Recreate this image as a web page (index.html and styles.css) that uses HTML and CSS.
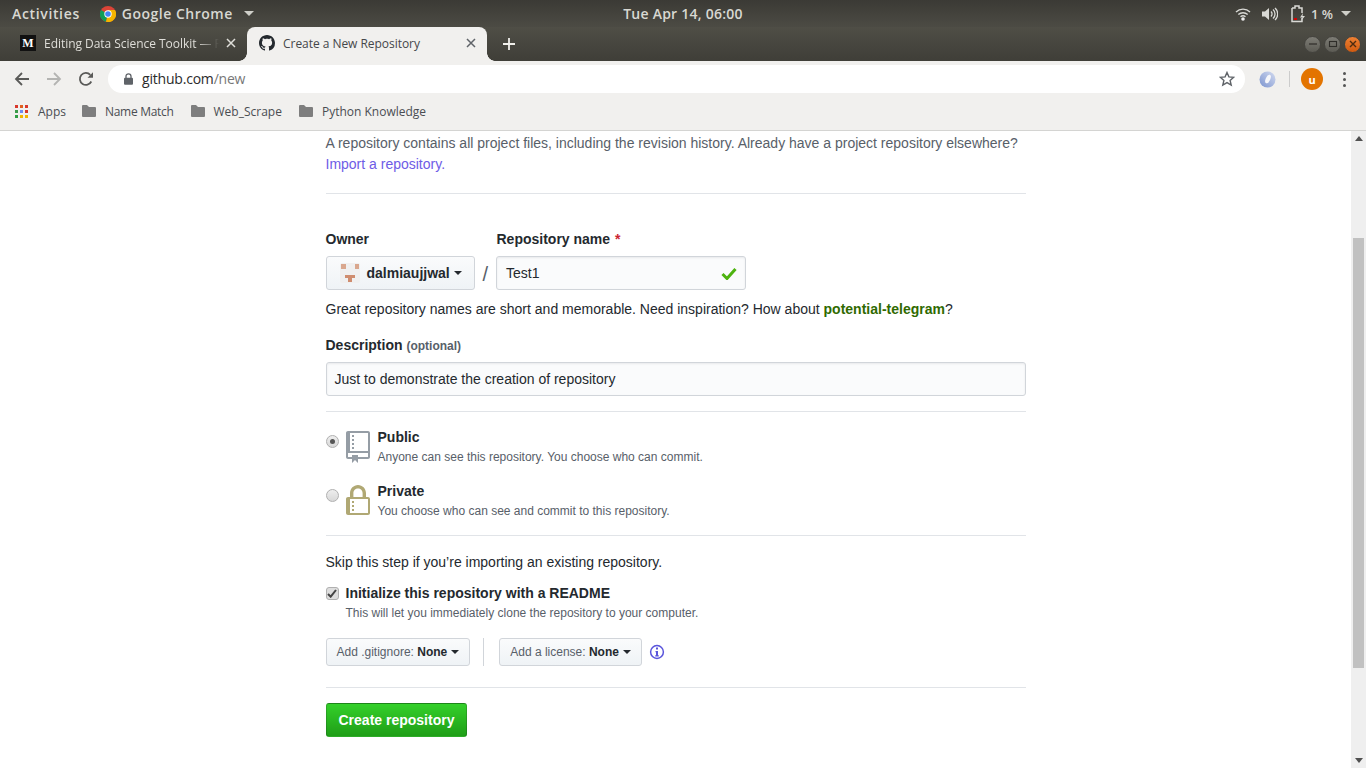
FILE: index.html
```html
<!DOCTYPE html>
<html lang="en">
<head>
<meta charset="utf-8">
<title>Create a New Repository</title>
<link rel="stylesheet" href="styles.css">
</head>
<body>
<div class="topbar">
  <div class="top-left">
    <span class="top-text activities">Activities</span>
    <span class="appmenu">
      <svg class="chrome-logo" width="16" height="16" viewBox="0 0 16 16"><circle cx="8" cy="8" r="8" fill="#db4437"/><path d="M8 8 L1 4 A8 8 0 0 0 6 15.8 Z" fill="#0f9d58"/><path d="M8 8 L6 15.8 A8 8 0 0 0 15 4 L8 4 Z" fill="#f4b400"/><circle cx="8" cy="8" r="3.7" fill="#fff"/><circle cx="8" cy="8" r="2.8" fill="#4285f4"/></svg>
      <span class="top-text">Google Chrome</span>
      <span class="caret-top"></span>
    </span>
  </div>
  <span class="top-text clock">Tue Apr 14, 06:00</span>
  <div class="top-right">
    <svg width="16" height="14" viewBox="0 0 16 14"><path d="M1 5a10 10 0 0 1 14 0M3.300 7.500a7 7 0 0 1 9.400 0M5.500 9.800a4 4 0 0 1 5 0" fill="none" stroke="#d9d9d5" stroke-width="1.400"/><circle cx="8" cy="12" r="1.800" fill="#eee"/></svg>
    <svg class="vol" width="16" height="14" viewBox="0 0 16 14"><path d="M0 4.500h3L7 1v12L3 9.500H0z" fill="#d9d9d5"/><path d="M9 4.500a3.500 3.500 0 0 1 0 5M11 2.500a6 6 0 0 1 0 9M13 1a8 8 0 0 1 0 12" fill="none" stroke="#d9d9d5" stroke-width="1.300"/></svg>
    <svg class="batt" width="16" height="18" viewBox="0 0 16 18"><path d="M1 3h3V1h4v2h3v5M11 13v3.500H1V3" fill="none" stroke="#d9d9d5" stroke-width="1.500"/><rect x="3" y="13" width="3" height="2" fill="#d40000"/><path d="M12 8l-3 4.500h2.500L10 16l4-5h-2.500z" fill="#d9d9d5"/></svg>
    <span class="top-text pct">1 %</span>
    <span class="caret-top"></span>
  </div>
</div>

<div class="tabstrip">
  <div class="tab tab-bg">
    <span class="m-logo">M</span>
    <span class="tab-title">Editing Data Science Toolkit — F</span>
    <svg class="tab-x" width="10" height="10" viewBox="0 0 10 10"><path d="M1 1l8 8M9 1l-8 8" stroke="#dfded9" stroke-width="1.500"/></svg>
  </div>
  <div class="tab tab-active">
    <svg class="gh-logo" width="16" height="16" viewBox="0 0 16 16"><path fill="#24292e" fill-rule="evenodd" d="M8 0C3.580 0 0 3.580 0 8c0 3.540 2.290 6.530 5.470 7.590.4.070.55-.170.55-.380 0-.190-.010-.820-.010-1.490-2.010.370-2.530-.490-2.690-.940-.090-.230-.480-.940-.820-1.130-.280-.150-.680-.520-.010-.530.630-.010 1.080.580 1.230.820.720 1.210 1.870.870 2.330.660.070-.520.280-.870.510-1.070-1.780-.2-3.640-.890-3.640-3.950 0-.870.310-1.590.820-2.150-.080-.2-.360-1.020.080-2.120 0 0 .670-.210 2.200.820.640-.180 1.320-.270 2-.270.680 0 1.360.090 2 .270 1.530-1.040 2.200-.820 2.200-.820.440 1.100.160 1.920.080 2.120.510.560.820 1.270.820 2.150 0 3.070-1.870 3.750-3.650 3.950.290.250.540.730.540 1.480 0 1.070-.010 1.930-.010 2.200 0 .210.150.460.550.380A8.013 8.013 0 0 0 16 8c0-4.420-3.580-8-8-8z"/></svg>
    <span class="tab-title">Create a New Repository</span>
    <svg class="tab-x" width="10" height="10" viewBox="0 0 10 10"><path d="M1 1l8 8M9 1l-8 8" stroke="#5f6368" stroke-width="1.500"/></svg>
  </div>
  <svg class="newtab" width="12" height="12" viewBox="0 0 12 12"><path d="M6 0v12M0 6h12" stroke="#f0efeb" stroke-width="1.800"/></svg>
  <div class="winbtns">
    <span class="winbtn"><svg width="10" height="10" viewBox="0 0 10 10"><path d="M1 5h8" stroke="#2e2d29" stroke-width="1.200"/></svg></span>
    <span class="winbtn"><svg width="10" height="10" viewBox="0 0 10 10"><rect x="1.500" y="2.500" width="7" height="5" fill="none" stroke="#2e2d29" stroke-width="1.100"/></svg></span>
    <span class="winbtn winbtn-close"><svg width="10" height="10" viewBox="0 0 10 10"><path d="M2 2l6 6M8 2l-6 6" stroke="#4b2b10" stroke-width="1.400"/></svg></span>
  </div>
</div>

<div class="toolbar">
  <svg class="nav-icon" width="16" height="16" viewBox="0 0 16 16"><path d="M15 8H2M8 2L2 8l6 6" fill="none" stroke="#5a5a58" stroke-width="1.800"/></svg>
  <svg class="nav-icon" width="16" height="16" viewBox="0 0 16 16"><path d="M1 8h13M8 2l6 6-6 6" fill="none" stroke="#b4b4b2" stroke-width="1.800"/></svg>
  <svg class="nav-icon" width="16" height="16" viewBox="0 0 16 16"><path d="M13.300 10.500A6 6 0 1 1 12.300 3.800" fill="none" stroke="#5a5a58" stroke-width="1.800"/><path d="M9.500 6.800H15V1.200z" fill="#5a5a58"/></svg>
  <div class="omnibox">
    <svg class="lock" width="9" height="12" viewBox="0 0 9 12"><path d="M2 5V3.300a2.500 2.500 0 0 1 5 0V5" fill="none" stroke="#5f6368" stroke-width="1.300"/><rect y="4.800" width="9" height="7" rx="1" fill="#5f6368"/></svg>
    <span class="url"><span class="url-host">github.com</span><span class="url-path">/new</span></span>
    <svg class="star" width="16" height="16" viewBox="0 0 16 16"><path d="M8 1.500l1.900 4.400 4.800.4-3.600 3.100 1.100 4.700L8 11.600l-4.200 2.500 1.100-4.700L1.300 6.300l4.800-.4z" fill="none" stroke="#5f6368" stroke-width="1.400"/></svg>
  </div>
  <svg class="ext-icon" width="17" height="17" viewBox="0 0 17 17"><defs><linearGradient id="extring" x1="0" y1="1" x2="1" y2="0"><stop offset="0" stop-color="#7c94cf"/><stop offset="1" stop-color="#d3dbf0"/></linearGradient></defs><circle cx="8.500" cy="8.500" r="8" fill="url(#extring)"/><ellipse cx="9" cy="8" rx="2.200" ry="4.600" transform="rotate(25 9 8)" fill="#f6f7fb"/></svg>
  <span class="tool-sep"></span>
  <span class="avatar">u</span>
  <span class="kebab"><i></i><i></i><i></i></span>
</div>

<div class="bookmarks">
  <span class="bm">
    <svg width="13" height="13" viewBox="0 0 13 13"><rect width="3" height="3" fill="#d9382c"/><rect x="5" width="3" height="3" fill="#e0601f"/><rect x="10" width="3" height="3" fill="#d9382c"/><rect y="5" width="3" height="3" fill="#3b9b4a"/><rect x="5" y="5" width="3" height="3" fill="#6f8cf0"/><rect x="10" y="5" width="3" height="3" fill="#d9382c"/><rect y="10" width="3" height="3" fill="#2f9e44"/><rect x="5" y="10" width="3" height="3" fill="#f2b400"/><rect x="10" y="10" width="3" height="3" fill="#f2b400"/></svg>
    <span>Apps</span>
  </span>
  <span class="bm">
    <svg width="14" height="12" viewBox="0 0 14 12"><path d="M0 1a1 1 0 0 1 1-1h4l2 2h6a1 1 0 0 1 1 1v8a1 1 0 0 1-1 1H1a1 1 0 0 1-1-1z" fill="#7e7e7e"/></svg>
    <span class="bm-tight">Name Match</span>
  </span>
  <span class="bm">
    <svg width="14" height="12" viewBox="0 0 14 12"><path d="M0 1a1 1 0 0 1 1-1h4l2 2h6a1 1 0 0 1 1 1v8a1 1 0 0 1-1 1H1a1 1 0 0 1-1-1z" fill="#7e7e7e"/></svg>
    <span>Web_Scrape</span>
  </span>
  <span class="bm">
    <svg width="14" height="12" viewBox="0 0 14 12"><path d="M0 1a1 1 0 0 1 1-1h4l2 2h6a1 1 0 0 1 1 1v8a1 1 0 0 1-1 1H1a1 1 0 0 1-1-1z" fill="#7e7e7e"/></svg>
    <span>Python Knowledge</span>
  </span>
</div>

<div class="viewport">
  <main class="page">
    <form class="repo-form">
      <p class="intro">A repository contains all project files, including the revision history. Already have a project repository elsewhere?<br><a class="link" href="#">Import a repository.</a></p>
      <hr class="rule rule-intro">

      <div class="name-row">
        <div class="field-owner">
          <div class="label">Owner</div>
          <div class="select select-owner">
            <svg class="identicon" width="20" height="20" viewBox="0 0 20 20"><rect width="20" height="20" fill="#f0f0f0"/><path d="M1 1h5v5H1zM15 1h4v5h-4z" fill="#d9a78e"/><path d="M5 12h10v3h-3v4H8v-4H5z" fill="#cf8d6f"/></svg>
            <span class="owner-name">dalmiaujjwal</span>
            <span class="caret"></span>
          </div>
        </div>
        <span class="slash">/</span>
        <div class="field-name">
          <div class="label label-repo">Repository name <span class="req">*</span></div>
          <div class="input input-name">
            <span>Test1</span>
            <svg class="check" width="16" height="13" viewBox="0 0 16 13"><path d="M1.500 7l4.500 4.500L14.500 2" fill="none" stroke="#4db30f" stroke-width="3"/></svg>
          </div>
        </div>
      </div>
      <p class="hint">Great repository names are short and memorable. Need inspiration? How about <strong class="suggest">potential-telegram</strong>?</p>

      <div class="label label-desc">Description <span class="optional">(optional)</span></div>
      <div class="input input-desc">Just to demonstrate the creation of repository</div>
      <hr class="rule rule-desc">

      <div class="choice choice-public">
        <span class="radio radio-on"></span>
        <svg class="choice-icon" width="24" height="32" viewBox="0 0 12 16"><path fill="#959da5" fill-rule="evenodd" d="M4 9H3V8h1v1zm0-3H3v1h1V6zm0-2H3v1h1V4zm0-2H3v1h1V2zm8-1v12c0 .55-.45 1-1 1H6v2l-1.500-1.500L3 16v-2H1c-.55 0-1-.45-1-1V1c0-.55.45-1 1-1h10c.55 0 1 .45 1 1zm-1 10H1v2h2v-1h3v1h5v-2zm0-10H2v9h9V1z"/></svg>
        <div class="choice-text">
          <div class="choice-title">Public</div>
          <div class="choice-note">Anyone can see this repository. You choose who can commit.</div>
        </div>
      </div>
      <div class="choice choice-private">
        <span class="radio"></span>
        <svg class="choice-icon" width="24" height="32" viewBox="0 0 12 16"><path fill="#b0a874" fill-rule="evenodd" d="M4 13H3v-1h1v1zm8-6v7c0 .55-.45 1-1 1H1c-.55 0-1-.45-1-1V7c0-.55.45-1 1-1h1V4c0-2.190 1.800-4 4-4s4 1.810 4 4v2h1c.55 0 1 .45 1 1zM3.700 6h4.600V4c0-1.270-1.030-2.300-2.300-2.300-1.270 0-2.300 1.030-2.300 2.300v2zM11 7H2v7h9V7zM4 8H3v1h1V8zm0 2H3v1h1v-1z"/></svg>
        <div class="choice-text">
          <div class="choice-title">Private</div>
          <div class="choice-note">You choose who can see and commit to this repository.</div>
        </div>
      </div>
      <hr class="rule rule-vis">

      <p class="skip">Skip this step if you’re importing an existing repository.</p>
      <div class="readme">
        <span class="checkbox"><svg width="10" height="9" viewBox="0 0 10 9"><path d="M1 5l2.700 2.700L9 1" fill="none" stroke="#444" stroke-width="2"/></svg></span>
        <div>
          <div class="readme-title">Initialize this repository with a README</div>
          <div class="readme-note">This will let you immediately clone the repository to your computer.</div>
        </div>
      </div>

      <div class="addons">
        <span class="btn-small">Add .gitignore: <b>None</b><span class="caret"></span></span>
        <span class="addon-sep"></span>
        <span class="btn-small">Add a license: <b>None</b><span class="caret"></span></span>
        <svg class="info" width="16" height="16" viewBox="0 0 16 16"><circle cx="8" cy="8" r="6.400" fill="none" stroke="#5a55dc" stroke-width="1.500"/><path d="M7 3.500h2v2H7zM6.500 7H9v4.200h.8v1.200H6.200v-1.200H7V8.200h-.5z" fill="#5a55dc"/></svg>
      </div>
      <hr class="rule rule-addons">

      <span class="btn-create">Create repository</span>
    </form>
  </main>
  <div class="scrollbar">
    <span class="arrow arrow-up"></span>
    <span class="thumb"></span>
    <span class="arrow arrow-down"></span>
  </div>
</div>
</body>
</html>
```
FILE: styles.css
```css
* { box-sizing: border-box; }
html, body { margin: 0; height: 100%; overflow: hidden; }
body { display: flex; flex-direction: column; width: 1366px; height: 768px; background: #fff; font-family: "Liberation Sans", Arial, sans-serif; color: #24292e; }

.topbar { height: 27px; flex: none; display: grid; grid-template-columns: 1fr auto 1fr; align-items: center; padding: 0 12px; background: linear-gradient(#3b3a35, #4c4b44); }
.top-left { display: flex; align-items: center; gap: 20px; }
.appmenu { display: flex; align-items: center; gap: 6px; }
.top-right { display: flex; align-items: center; justify-content: flex-end; padding-right: 3px; }
.top-text { font: 600 14px "Open Sans", "Noto Sans", sans-serif; color: #d8d8d2; letter-spacing: .5px; white-space: nowrap; }
.activities { letter-spacing: .65px; }
.clock { letter-spacing: .25px; }
.caret-top { width: 0; height: 0; margin-left: 5px; border: 5px solid transparent; border-top: 5px solid #cfcfc9; border-bottom: 0; }
.vol { margin-left: 11px; }
.batt { margin-left: 13px; }
.pct { margin-left: 4px; font-size: 13px; letter-spacing: 0; }
.top-right .caret-top { margin-left: 8px; }

.tabstrip { height: 34px; flex: none; display: flex; align-items: flex-end; padding-left: 8px; background: linear-gradient(#4f4e46, #3f3e38); }
.tab { height: 34px; display: flex; align-items: center; position: relative; padding-bottom: 2px; }
.tab-bg { width: 239px; padding-left: 12px; padding-right: 11px; color: #dfded9; }
.tab-active { width: 240px; padding-left: 12px; padding-right: 11px; color: #45474a; background: #f1f0ee; border-radius: 8px 8px 0 0; }
.tab-active::before, .tab-active::after { content: ""; position: absolute; bottom: 0; width: 8px; height: 8px; }
.tab-active::before { left: -8px; background: radial-gradient(circle at 0 0, transparent 7.5px, #f1f0ee 8px); }
.tab-active::after { right: -8px; background: radial-gradient(circle at 100% 0, transparent 7.500px, #f1f0ee 8px); }
.m-logo { width: 16px; height: 16px; flex: none; display: flex; align-items: center; justify-content: center; background: #111; color: #fff; font: bold 12px "Liberation Serif", serif; }
.gh-logo { flex: none; }
.tab-title { margin-left: 8px; flex: 1; overflow: hidden; white-space: nowrap; font: 12px "Open Sans", "Noto Sans", sans-serif; letter-spacing: -.04px; }
.tab-bg .tab-title { -webkit-mask-image: linear-gradient(90deg, #000 88%, transparent); mask-image: linear-gradient(90deg, #000 88%, transparent); }
.tab-x { flex: none; }
.tab-bg .tab-x { margin-left: 7px; }
.newtab { align-self: center; margin-left: 16px; }
.winbtns { margin-left: auto; align-self: center; display: flex; gap: 3px; padding-right: 5px; }
.winbtn { width: 17px; height: 17px; border-radius: 50%; background: linear-gradient(#7d7c75, #5c5b54); border: 1px solid #45443f; display: flex; align-items: center; justify-content: center; }
.winbtn-close { background: linear-gradient(#ee8033, #cf5a10); }

.toolbar { height: 36px; flex: none; display: flex; align-items: center; background: #f1f0ee; padding-left: 14px; }
.nav-icon { flex: none; margin-right: 16px; }
.nav-icon + .nav-icon + .nav-icon { margin-right: 14px; }
.omnibox { width: 1137px; height: 28px; flex: none; display: flex; align-items: center; padding: 0 10px 0 16px; background: #fff; border-radius: 14px; }
.lock { flex: none; }
.url { margin-left: 9px; padding-bottom: 2px; font: 14px "Open Sans", "Noto Sans", sans-serif; letter-spacing: -.2px; flex: 1; }
.url-host { color: #2b2b2b; }
.url-path { color: #777; }
.ext-icon { flex: none; margin-left: 14px; }
.tool-sep { width: 1px; height: 16px; margin-left: 13px; background: #ccc; }
.avatar { width: 22px; height: 22px; margin-left: 11px; border-radius: 50%; background: #e37400; color: #fff; display: flex; align-items: center; justify-content: center; font: bold 11px "Open Sans", sans-serif; }
.kebab { margin-left: 20px; display: flex; flex-direction: column; gap: 3px; }
.kebab i { width: 3px; height: 3px; border-radius: 50%; background: #555; display: block; }

.bookmarks { height: 34px; flex: none; display: flex; align-items: center; padding: 0 0 5px 15px; background: #f1f0ee; border-bottom: 1px solid #d4d4d2; }
.bm { display: flex; align-items: center; gap: 9px; margin-right: 17px; font: 12px "Open Sans", "Noto Sans", sans-serif; color: #4a4d52; white-space: nowrap; }
.bm:first-child { gap: 10px; margin-right: 16px; }
.bm-tight { letter-spacing: -.3px; }

.viewport { flex: 1; min-height: 0; display: flex; overflow: hidden; }
.page { flex: 1; overflow: hidden; }
.repo-form { width: 700px; margin-left: 325.5px; font-size: 14px; }

.intro { margin: 2px 0 0; line-height: 21px; color: #586069; }
.link { color: #6e5ce6; text-decoration: none; }
.rule { height: 1px; margin: 0; border: 0; background: #e1e4e8; }
.rule-intro { margin-top: 18px; }

.name-row { display: flex; margin-top: 35px; }
.label { font-weight: bold; line-height: 20px; }
.label-repo { padding-left: .5px; }
.field-owner { width: 149px; }
.select-owner { margin-top: 7px; height: 34px; display: flex; align-items: center; padding-left: 13px; border: 1px solid #d1d5da; border-radius: 3px; background: linear-gradient(#fafbfc, #eff3f6); font-weight: bold; }
.identicon { flex: none; border-radius: 2px; }
.owner-name { margin-left: 7px; }
.caret { display: inline-block; width: 0; height: 0; margin-left: 4px; vertical-align: middle; border: 4px solid transparent; border-top-color: #24292e; border-bottom: 0; }
.slash { width: 21.5px; margin-top: 27px; padding-top: 3px; text-align: center; font-size: 20px; line-height: 30px; color: #586069; }
.field-name { width: 250px; }
.req { margin-left: 1px; color: #cb2431; }
.input { border: 1px solid #d1d5da; border-radius: 3px; background: #fafbfc; color: #24292e; display: flex; align-items: center; box-shadow: inset 0 1px 2px rgba(27,31,35,.075); }
.input-name { margin-top: 7px; height: 34px; padding: 0 8px 0 9px; justify-content: space-between; }
.check { flex: none; }
.hint { margin: 9px 0 0; line-height: 20px; }
.suggest { color: #2f6a00; }
.label-desc { margin-top: 16px; }
.optional { font-size: 12px; color: #586069; }
.input-desc { margin-top: 6px; height: 34px; padding: 0 8px; }
.rule-desc { margin-top: 15px; }

.choice { display: flex; align-items: flex-start; }
.choice-public { margin-top: 15px; }
.choice-private { margin-top: 15px; }
.radio { width: 13px; height: 13px; margin-top: 8px; flex: none; border-radius: 50%; border: 1px solid #b0b0b0; background: linear-gradient(#eeeeee, #d8d8d8); display: flex; align-items: center; justify-content: center; }
.radio-on::after { content: ""; width: 5px; height: 5px; border-radius: 50%; background: #555; }
.choice-icon { flex: none; margin: 4px 8px 0 7px; }
.choice-title { font-weight: bold; line-height: 20px; }
.choice-note { margin-top: 1px; font-size: 12px; line-height: 18px; color: #586069; }
.rule-vis { margin-top: 15px; }

.skip { margin: 16px 0 0; line-height: 20px; }
.readme { display: flex; margin-top: 11px; }
.checkbox { width: 13px; height: 13px; margin: 4px 7px 0 0; flex: none; display: flex; align-items: center; justify-content: center; border: 1px solid #b0b0b0; border-radius: 3px; background: #dedede; }
.readme-title { font-weight: bold; line-height: 20px; }
.readme-note { margin-top: 1px; font-size: 12px; line-height: 18px; color: #586069; }

.addons { display: flex; align-items: center; margin-top: 16px; }
.btn-small { height: 28px; display: flex; align-items: center; padding: 0 10px; white-space: pre; border: 1px solid #d1d5da; border-radius: 3px; background: linear-gradient(#fafbfc, #eff3f6); font-size: 12px; color: #586069; }
.btn-small b { color: #24292e; }
.addon-sep { width: 1px; height: 28px; margin: 0 15px 0 13px; background: #d1d5da; }
.info { margin-left: 7px; }
.rule-addons { margin-top: 21px; }

.btn-create { display: inline-block; margin-top: 15px; padding: 0 12px; height: 34px; line-height: 32px; border: 1px solid rgba(27,31,35,.2); border-radius: 3px; background-image: linear-gradient(-180deg, #34d02a, #1f9e17); color: #fff; font-weight: bold; }

.scrollbar { width: 15px; flex: none; display: flex; flex-direction: column; align-items: center; background: #efefef; }
.arrow { width: 0; height: 0; margin: 5px 0; flex: none; border: 4px solid transparent; }
.arrow-up { border-bottom: 5px solid #505050; border-top: 0; }
.arrow-down { border-top: 5px solid #505050; border-bottom: 0; margin-top: auto; }
.thumb { width: 11px; height: 430px; margin-top: 92px; background: #c1c1c1; flex: none; }
```
